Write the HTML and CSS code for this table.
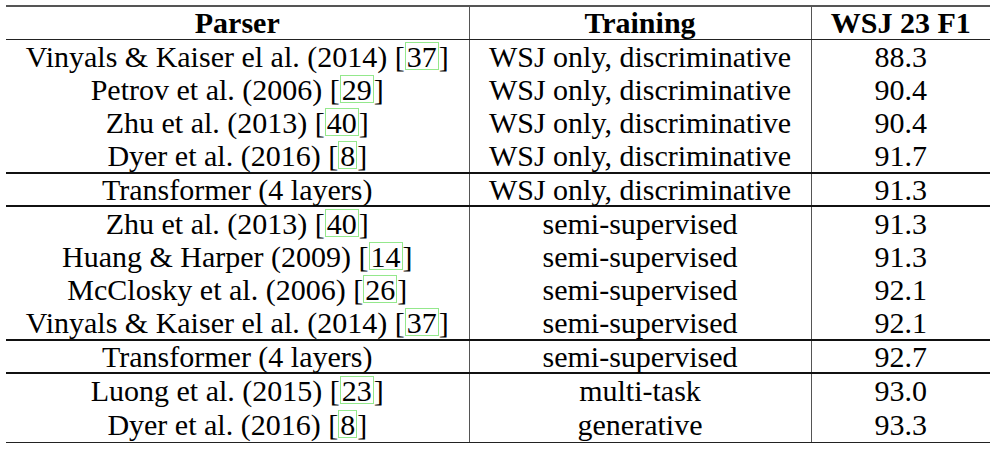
FILE: index.html
```html
<!DOCTYPE html>
<html lang="en">
<head>
  <meta charset="UTF-8" />
  <title>Parsing results</title>
  <link rel="stylesheet" href="styles.css">
</head>
<body>

  <table class="results">
    <colgroup>
      <col class="col-parser">
      <col class="col-training">
      <col class="col-score">
    </colgroup>
    <thead>
      <tr>
        <th>Parser</th>
        <th>Training</th>
        <th>WSJ 23 F1</th>
      </tr>
    </thead>
    <tbody>
      <tr><td>Vinyals &amp; Kaiser el al. (2014) [<span class="ref">37</span>]</td><td>WSJ only, discriminative</td><td>88.3</td></tr>
      <tr><td>Petrov et al. (2006) [<span class="ref">29</span>]</td><td>WSJ only, discriminative</td><td>90.4</td></tr>
      <tr><td>Zhu et al. (2013) [<span class="ref">40</span>]</td><td>WSJ only, discriminative</td><td>90.4</td></tr>
      <tr><td>Dyer et al. (2016) [<span class="ref">8</span>]</td><td>WSJ only, discriminative</td><td>91.7</td></tr>
    </tbody>
    <tbody class="ours">
      <tr><td>Transformer (4 layers)</td><td>WSJ only, discriminative</td><td>91.3</td></tr>
    </tbody>
    <tbody>
      <tr><td>Zhu et al. (2013) [<span class="ref">40</span>]</td><td>semi-supervised</td><td>91.3</td></tr>
      <tr><td>Huang &amp; Harper (2009) [<span class="ref">14</span>]</td><td>semi-supervised</td><td>91.3</td></tr>
      <tr><td>McClosky et al. (2006) [<span class="ref">26</span>]</td><td>semi-supervised</td><td>92.1</td></tr>
      <tr><td>Vinyals &amp; Kaiser el al. (2014) [<span class="ref">37</span>]</td><td>semi-supervised</td><td>92.1</td></tr>
    </tbody>
    <tbody class="ours">
      <tr><td>Transformer (4 layers)</td><td>semi-supervised</td><td>92.7</td></tr>
    </tbody>
    <tbody class="last">
      <tr><td>Luong et al. (2015) [<span class="ref">23</span>]</td><td>multi-task</td><td>93.0</td></tr>
      <tr><td>Dyer et al. (2016) [<span class="ref">8</span>]</td><td>generative</td><td>93.3</td></tr>
    </tbody>
  </table>

</body>
</html>
```

FILE: styles.css
```css
body {
  margin: 0;
  background: white;
  color: #000;
  font-family: "Liberation Serif", "Times New Roman", serif;
}

.results {
  border-collapse: collapse;
  table-layout: fixed;
  width: 984px;
  margin: 5px 0 0 6px;
  font-size: 30px;
}

.col-parser { width: 463px; }
.col-training { width: 342px; }
.col-score { width: 179px; }

.results th,
.results td {
  padding: 0;
  height: 33px;
  text-align: center;
  vertical-align: middle;
  white-space: nowrap;
  line-height: 33px;
}

.results th + th,
.results td + td {
  border-left: 1px solid #555;
}

.results thead th {
  height: 32px;
  line-height: 32px;
  font-weight: bold;
  border-top: 2px solid #555;
  border-bottom: 1px solid #222;
}

.results tbody + tbody tr:first-child td {
  border-top: 2px solid #111;
}

.results .ours td {
  height: 31px;
  line-height: 31px;
}

.results .last td {
  height: 34px;
  line-height: 34px;
}

.results .last tr:last-child td {
  border-bottom: 1px solid #222;
}

.ref {
  display: inline-block;
  border: 1px solid #94e88c;
  line-height: 25px;
  padding: 1px 1px 0;
}
```
